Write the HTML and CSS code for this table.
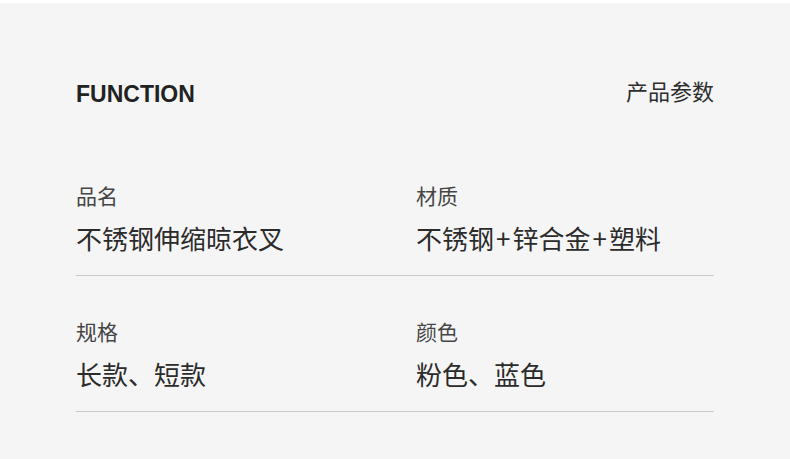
FILE: index.html
```html
<!DOCTYPE html>
<html lang="zh-CN">
<head>
<meta charset="utf-8">
<title>产品参数</title>
<link rel="stylesheet" href="styles.css">
</head>
<body>
<div class="page">
  <header class="head">
    <h1 class="head-en">FUNCTION</h1>
    <h2 class="head-cn">产品参数</h2>
  </header>
  <section class="specs">
    <div class="spec-row">
      <div class="spec">
        <div class="spec-label">品名</div>
        <div class="spec-value">不锈钢伸缩晾衣叉</div>
      </div>
      <div class="spec">
        <div class="spec-label">材质</div>
        <div class="spec-value">不锈钢<span class="plus">+</span>锌合金<span class="plus">+</span>塑料</div>
      </div>
    </div>
    <div class="spec-row">
      <div class="spec">
        <div class="spec-label">规格</div>
        <div class="spec-value">长款、短款</div>
      </div>
      <div class="spec">
        <div class="spec-label">颜色</div>
        <div class="spec-value">粉色、蓝色</div>
      </div>
    </div>
  </section>
</div>
</body>
</html>
```
FILE: styles.css
```css
html, body {
  margin: 0;
  padding: 0;
  background: #f5f5f5;
}
body {
  font-family: "Noto Sans CJK SC", "Noto Sans", sans-serif;
  height: 459px;
  overflow: hidden;
}
.page {
  border-top: 3px solid #ffffff;
  padding: 79px 76px 0;
  width: 638px;
}
.head {
  display: flex;
  justify-content: space-between;
  align-items: flex-start;
  height: 23px;
  margin-bottom: 35px;
}
.head-en {
  margin: 0;
  padding-top: 1px;
  font-family: "Liberation Sans", Arial, sans-serif;
  font-weight: 700;
  font-size: 23px;
  line-height: 1;
  color: #222222;
  letter-spacing: 0;
}
.head-cn {
  margin: -3px 0 0;
  font-weight: 400;
  font-size: 22px;
  line-height: 1;
  color: #2e2e2e;
}
.spec-row {
  display: grid;
  grid-template-columns: 340px 1fr;
  padding: 45px 0 24px;
  border-bottom: 1px solid #c8c8c8;
}
.spec-label {
  font-size: 21px;
  line-height: 1;
  color: #454545;
  margin-bottom: 19px;
}
.spec-value {
  font-size: 26px;
  font-weight: 400;
  line-height: 1;
  color: #2b2b2b;
}
.plus {
  margin: 0 2px;
}
```
